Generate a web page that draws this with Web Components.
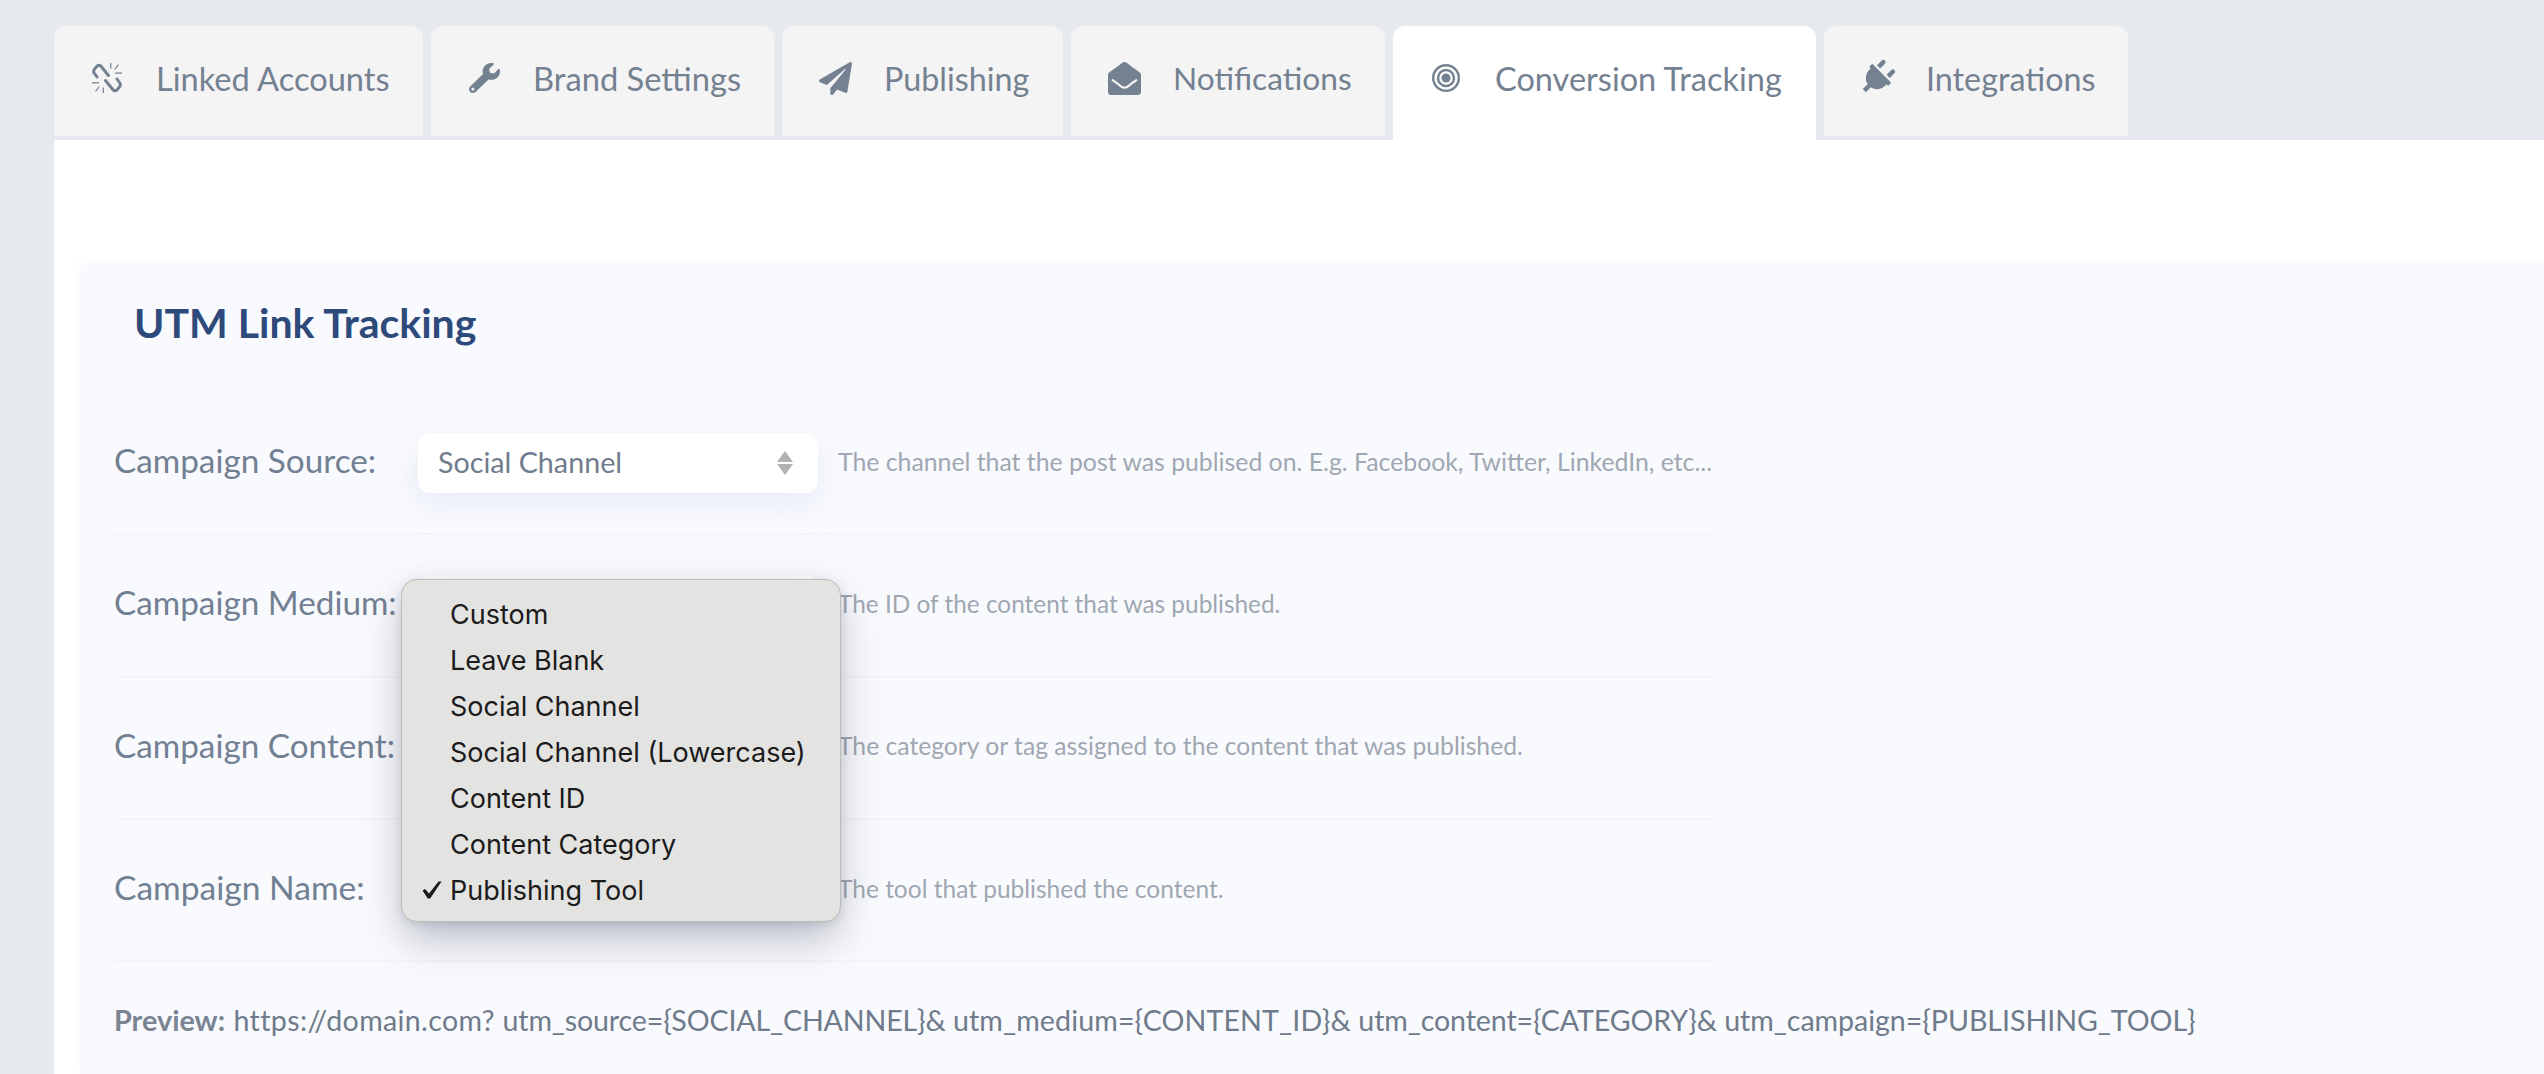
<!doctype html>
<html>
<head>
<meta charset="utf-8">
<title>Conversion Tracking</title>
<style>
  html, body { margin: 0; height: 100%; overflow: hidden; background: #e6e9ee; }
  body { font-family: Lato, "Liberation Sans", sans-serif; color: #748191; }
</style>
</head>
<body>
<settings-page>
  <settings-tabs>
    <settings-tab icon="unlink" style="--w:369px;--fs:32.6px">Linked Accounts</settings-tab>
    <settings-tab icon="wrench" style="--w:343px;--fs:32.7px">Brand Settings</settings-tab>
    <settings-tab icon="plane" style="--w:281px;--fs:32.3px">Publishing</settings-tab>
    <settings-tab icon="envelope" style="--w:314px;--fs:31.7px">Notifications</settings-tab>
    <settings-tab icon="target" active style="--w:423px;--fs:32.5px">Conversion Tracking</settings-tab>
    <settings-tab icon="plug" style="--w:304px;--fs:32.3px">Integrations</settings-tab>
  </settings-tabs>
  <utm-card heading="UTM Link Tracking">
    <utm-row label="Campaign Source:" value="Social Channel">The channel that the post was publised on. E.g. Facebook, Twitter, LinkedIn, etc...</utm-row>
    <utm-row label="Campaign Medium:" style="--help:24.4px">The ID of the content that was published.</utm-row>
    <utm-row label="Campaign Content:" style="--help:24.7px">The category or tag assigned to the content that was published.</utm-row>
    <utm-row label="Campaign Name:" style="--label:33.6px;--help:24.5px">The tool that published the content.</utm-row>
    <utm-preview><span style="letter-spacing:.35px">https://domain.com? </span><span style="letter-spacing:-.15px">utm_source={SOCIAL_CHANNEL}&amp; </span><span style="letter-spacing:.12px">utm_medium={CONTENT_ID}&amp; </span><span style="letter-spacing:-.12px">utm_content={CATEGORY}&amp; </span><span style="letter-spacing:-.05px">utm_campaign={PUBLISHING_TOOL}</span></utm-preview>
    <select-menu slot="overlay" selected="Publishing Tool" options="Custom|Leave Blank|Social Channel|Social Channel (Lowercase)|Content ID|Content Category|Publishing Tool"></select-menu>
  </utm-card>
</settings-page>

<script>
// iconos de las pestañas
const ICONS = {
  unlink: `<svg width="30" height="30" viewBox="0 0 30 30" fill="none" stroke="currentColor">
      <path stroke-width="3" stroke-linecap="round" stroke-linejoin="round" d="M5 14 1.800 9.500Q1.200 7.500 3 5.500L5 3.200Q7 1.500 9 3.200L16.500 12.500"/>
      <path stroke-width="3" stroke-linecap="round" stroke-linejoin="round" d="M25 16 28.200 20.500Q28.800 22.500 27 24.500L25 26.800Q23 28.500 21 26.800L13.500 17.500"/>
      <path stroke-width="1.200" d="M18.700 0v5.500M26.500 1.500 22.800 6.500M23 10.200h7M11.300 30v-5.500M3.500 28.500 7.200 23.500M7 19.800H0"/>
    </svg>`,
  wrench: `<svg width="31" height="30" viewBox="0 0 512 512" fill="currentColor" preserveAspectRatio="none"><path d="M507.73 109.1c-2.24-9.03-13.54-12.09-20.12-5.51l-74.36 74.36-67.88-11.31-11.31-67.88 74.36-74.36c6.62-6.62 3.43-17.9-5.66-20.16-47.38-11.74-99.55.91-136.58 37.93-39.64 39.64-50.55 97.1-34.05 147.2L18.74 402.76c-24.99 24.99-24.99 65.51 0 90.5 24.99 24.99 65.51 24.99 90.5 0l213.21-213.21c50.12 16.71 107.47 5.68 147.37-34.22 37.07-37.07 49.7-89.32 37.91-136.73zM64 472c-13.25 0-24-10.75-24-24 0-13.26 10.75-24 24-24s24 10.74 24 24c0 13.25-10.75 24-24 24z"/></svg>`,
  plane: `<svg width="33" height="33" viewBox="0 0 512 512" fill="currentColor"><path d="M476 3.2L12.5 270.6c-18.1 10.4-15.8 35.6 2.2 43.2L121 358.4l287.3-253.2c5.5-4.9 13.3 2.6 8.6 8.300L176 407v80.500c0 23.600 28.500 32.900 42.500 15.800L282 426l124.600 52.200c14.200 6 30.400-2.900 33-18.200l72-432C515 7.800 493.300-6.800 476 3.200z"/></svg>`,
  envelope: `<svg width="33" height="33" viewBox="0 0 512 512" fill="currentColor"><path d="M512 464c0 26.51-21.49 48-48 48H48c-26.51 0-48-21.49-48-48V200.724a48 48 0 0 1 18.387-37.776c24.913-19.529 45.501-35.365 164.2-121.511C199.412 29.17 232.797-.347 256 .003c23.198-.354 56.596 29.172 73.413 41.433 118.687 86.137 139.303 101.995 164.2 121.512A48 48 0 0 1 512 200.724V464zm-65.666-196.605c-2.563-3.728-7.7-4.595-11.339-1.907-22.845 16.873-55.462 40.705-105.582 77.079-16.825 12.266-50.21 41.781-73.413 41.43-23.211.344-56.559-29.143-73.413-41.43-50.114-36.37-82.734-60.204-105.582-77.079-3.639-2.688-8.776-1.821-11.339 1.907l-9.072 13.196a7.998 7.998 0 0 0 1.839 10.967c22.887 16.899 55.454 40.69 105.303 76.868 20.274 14.781 56.524 47.813 92.264 47.573 35.724.242 71.961-32.771 92.263-47.573 49.85-36.179 82.418-59.97 105.303-76.868a7.998 7.998 0 0 0 1.839-10.967l-9.071-13.196z"/></svg>`,
  target: `<svg width="28" height="28" viewBox="0 0 28 28" fill="none" stroke="currentColor" stroke-width="2.400"><circle cx="14" cy="14" r="12.800"/><circle cx="14" cy="14" r="8"/><circle cx="14" cy="14" r="4.500" fill="currentColor" stroke="none"/></svg>`,
  plug: `<svg width="34" height="34" viewBox="-72 -64 528 640" fill="currentColor" style="transform:rotate(45deg) scale(1.32)"><path d="M320 32a32 32 0 0 0-64 0v96h64Zm48 128H16A16 16 0 0 0 0 176v32a16 16 0 0 0 16 16H32v32A160.070 160.070 0 0 0 160 412.800V512h64V412.800A160.070 160.070 0 0 0 352 256V224h16a16 16 0 0 0 16-16V176A16 16 0 0 0 368 160ZM128 32a32 32 0 0 0-64 0v96h64Z"/></svg>`
}

class SettingsPage extends HTMLElement {
  static Styles = /* Css */`
    :host { display: block; padding: 26px 0 0 54px; }
  `
  constructor () {
    super()
    this.attachShadow({ mode: 'open' })
    this.shadowRoot.innerHTML = `<style>${SettingsPage.Styles}</style><slot></slot>`
  }
}

class SettingsTabs extends HTMLElement {
  static Styles = /* Css */`
    :host { display: flex; gap: 8px; height: 114px; align-items: flex-start; }
  `
  constructor () {
    super()
    this.attachShadow({ mode: 'open' })
    this.shadowRoot.innerHTML = `<style>${SettingsTabs.Styles}</style><slot></slot>`
  }
}

class SettingsTab extends HTMLElement {
  static Styles = /* Css */`
    :host {
      display: flex;
      align-items: center;
      box-sizing: border-box;
      flex: none;
      width: var(--w);
      height: 110px;
      padding: 0 0 6px 36px;
      gap: 32px;
      background: #f4f4f5;
      border-radius: 12px 12px 0 0;
      font-size: var(--fs);
      color: #748191;
      white-space: nowrap;
    }
    :host([active]) { height: 114px; padding-bottom: 10px; background: #fff; }
    span { display: flex; align-items: center; justify-content: center; width: 34px; height: 34px; flex: none; }
    svg { display: block; }
  `
  constructor () {
    super()
    this.attachShadow({ mode: 'open' })
  }

  connectedCallback () {
    this.shadowRoot.innerHTML = /* HTML */`
      <style>${SettingsTab.Styles}</style>
      <span>${ICONS[this.getAttribute('icon')]}</span>
      <slot></slot>
    `
  }
}

class UtmCard extends HTMLElement {
  static Styles = /* Css */`
    :host { display: block; box-sizing: border-box; background: #fff; padding: 123px 0 0 26px; height: 934px; overflow: hidden; }
    section {
      position: relative;
      box-sizing: border-box;
      height: 100%;
      padding: 30px 0 0 34px;
      background: #f9fafe;
      border-radius: 12px 0 0 0;
      box-shadow: 0 0 10px rgba(232, 236, 245, .35);
    }
    h2 {
      margin: 0 0 40px 20px;
      font-size: 41px;
      line-height: 60px;
      font-weight: 700;
      color: #2d4a7b;
    }
  `
  constructor () {
    super()
    this.attachShadow({ mode: 'open' })
  }

  connectedCallback () {
    this.shadowRoot.innerHTML = /* HTML */`
      <style>${UtmCard.Styles}</style>
      <section>
        <h2>${this.getAttribute('heading')}</h2>
        <slot></slot>
        <slot name="overlay"></slot>
      </section>
    `
  }
}

class UtmRow extends HTMLElement {
  static Styles = /* Css */`
    :host {
      display: flex;
      align-items: center;
      box-sizing: border-box;
      width: 1599px;
      height: 142.300px;
      border-bottom: 2px solid #f4f5f7;
    }
    label { width: 304px; flex: none; margin-bottom: 6px; font-size: var(--label, 33.300px); color: #728093; white-space: nowrap; }
    .select {
      display: flex;
      align-items: center;
      justify-content: space-between;
      box-sizing: border-box;
      width: 400px;
      height: 60px;
      flex: none;
      margin-right: 20px;
      padding: 0 25px 0 20px;
      background: #fff;
      border-radius: 12px;
      box-shadow: 0 12px 30px rgba(190, 200, 230, .28);
      font-size: 28.700px;
      color: #6f7c8d;
    }
    .select span { margin-top: -2px; }
    .arrows { display: block; width: 16px; height: 24px; margin-left: auto; }
    p { margin: 0 0 4px; font-size: var(--help, 24.800px); color: #9fa7b2; white-space: nowrap; }
  `
  constructor () {
    super()
    this.attachShadow({ mode: 'open' })
  }

  connectedCallback () {
    const value = this.getAttribute('value') || ''
    this.shadowRoot.innerHTML = /* HTML */`
      <style>${UtmRow.Styles}</style>
      <label>${this.getAttribute('label')}</label>
      <div class="select">
        <span>${value}</span>
        <svg class="arrows" viewBox="0 0 16 24" fill="#b0b1b2"><path d="M8 0l8 11H0zM8 24 0 13h16z"/></svg>
      </div>
      <p><slot></slot></p>
    `
  }
}

class UtmPreview extends HTMLElement {
  static Styles = /* Css */`
    :host {
      display: block;
      padding-top: 41px;
      font-size: 28.600px;
      line-height: 34px;
      color: #6f7b8b;
      white-space: nowrap;
    }
    b { font-weight: 700; font-size: 28.800px; color: #7a8492; margin-right: 1px; }
  `
  constructor () {
    super()
    this.attachShadow({ mode: 'open' })
    this.shadowRoot.innerHTML = `<style>${UtmPreview.Styles}</style><b>Preview:</b> <slot></slot>`
  }
}

class SelectMenu extends HTMLElement {
  static Styles = /* Css */`
    :host {
      position: absolute;
      left: 321px;
      top: 316px;
      display: block;
      box-sizing: border-box;
      width: 440px;
      height: 343px;
      padding: 12px 0 8px;
      background: #e3e3e1;
      border: 1px solid #bcbcba;
      border-radius: 16px;
      box-shadow: 0 18px 42px rgba(60, 65, 80, .28), 0 2px 8px rgba(60, 65, 80, .14);
      font-family: Inter, "Noto Sans", sans-serif;
      font-size: 27px;
      color: #1b1b1b;
    }
    div { position: relative; height: 46px; line-height: 46px; padding-left: 48px; white-space: nowrap; }
    svg { position: absolute; left: 20px; top: 13px; }
  `
  constructor () {
    super()
    this.attachShadow({ mode: 'open' })
  }

  connectedCallback () {
    const selected = this.getAttribute('selected')
    const items = this.getAttribute('options').split('|').map(name => {
      const check = name === selected
        ? '<svg width="20" height="18" viewBox="0 0 20 18" fill="#1b1b1b"><path d="M.5 9.500 3 8l4 4.500L16.500.5H19.500L8.200 17.500H5.800Z"/></svg>'
        : ''
      return `<div>${check}${name}</div>`
    })
    this.shadowRoot.innerHTML = `<style>${SelectMenu.Styles}</style>${items.join('')}`
  }
}

customElements.define('settings-page', SettingsPage)
customElements.define('settings-tabs', SettingsTabs)
customElements.define('settings-tab', SettingsTab)
customElements.define('utm-card', UtmCard)
customElements.define('utm-row', UtmRow)
customElements.define('utm-preview', UtmPreview)
customElements.define('select-menu', SelectMenu)
</script>
</body>
</html>
